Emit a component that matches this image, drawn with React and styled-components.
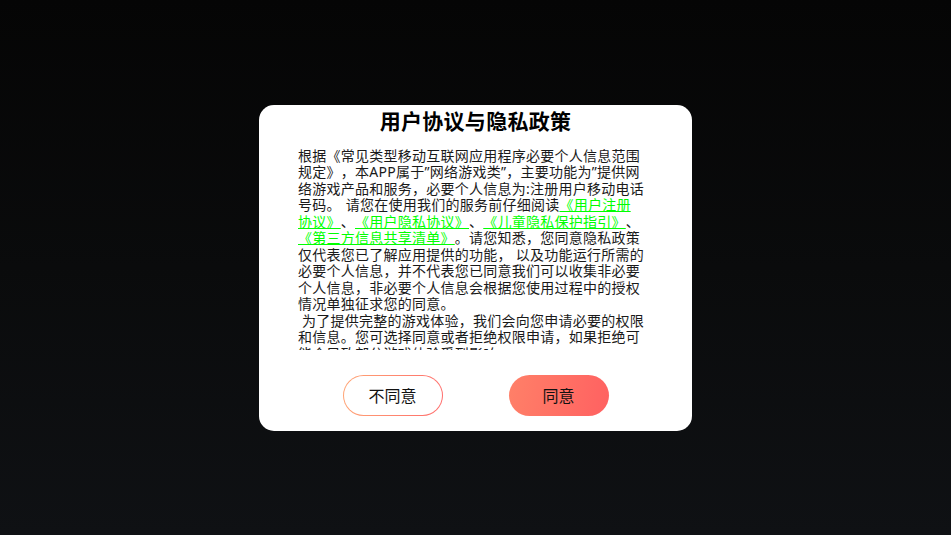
import React from "react";
import styled, { createGlobalStyle } from "styled-components";

const Global = createGlobalStyle`
  html, body { margin: 0; padding: 0; height: 100%; }
  body {
    background: linear-gradient(180deg, #050505 0%, #0a0b0c 50%, #0f1114 100%);
    font-family: "Noto Sans CJK SC", "Noto Sans", sans-serif;
  }
  #root { height: 100%; }
`;

const Screen = styled.div`
  width: 100vw;
  height: 100vh;
  display: flex;
  align-items: center;
  justify-content: center;
`;

const Card = styled.div`
  width: 433px;
  height: 326px;
  box-sizing: border-box;
  background: #ffffff;
  border-radius: 15px;
  display: flex;
  flex-direction: column;
  align-items: center;
  padding: 1px 0 0;
`;

const Title = styled.h1`
  margin: 0;
  font-size: 21px;
  line-height: 28px;
  font-weight: 700;
  color: #000;
  letter-spacing: 0.3px;
`;

const Scroll = styled.div`
  margin-top: 14px;
  align-self: flex-start;
  margin-left: 39px;
  width: 346.3px;
  height: 202px;
  overflow: hidden;
`;

const Body = styled.p`
  margin: 0;
  font-family: "Noto Sans", "Noto Sans CJK SC", sans-serif;
  font-size: 14px;
  letter-spacing: 0.25px;
  line-height: 16.5px;
  color: #1a1a1a;
  white-space: pre-wrap;
  word-break: break-all;
  text-spacing-trim: space-all;
`;

const Link = styled.a`
  color: #00ff00;
  text-decoration: underline;
  text-decoration-thickness: 1px;
  text-underline-offset: 1px;
`;

const Buttons = styled.div`
  margin-top: 25px;
  display: flex;
  gap: 66px;
`;

const Button = styled.button`
  width: 100px;
  height: 41px;
  border-radius: 21px;
  font-family: inherit;
  font-size: 16px;
  color: #111;
  cursor: pointer;
  box-sizing: border-box;
  padding: 0;
  border: ${(p) => (p.$primary ? "none" : "1.5px solid transparent")};
  background: ${(p) =>
    p.$primary
      ? "linear-gradient(100deg, #ff8068 0%, #ff6161 100%)"
      : "linear-gradient(#fff, #fff) padding-box, linear-gradient(100deg, #ffa675 0%, #ff6b6b 100%) border-box"};
`;

export default function App() {
  return (
    <>
      <Global />
      <Screen>
        <Card>
          <Title>用户协议与隐私政策</Title>
          <Scroll>
            <Body>
              {"根据《常见类型移动互联网应用程序必要个人信息范围规定》，本APP属于”网络游戏类”，主要功能为”提供网络游戏产品和服务，必要个人信息为:注册用户移动电话号码。\u2004请您在使用我们的服务前仔细阅读"}
              <Link>《用户注册协议》</Link>
              {"、"}
              <Link>《用户隐私协议》</Link>
              {"、"}
              <Link>《儿童隐私保护指引》</Link>
              {"、"}
              <Link>《第三方信息共享清单》</Link>
              {"。请您知悉，您同意隐私政策仅代表您已了解应用提供的功能， 以及功能运行所需的必要个人信息，并不代表您已同意我们可以收集非必要个人信息，非必要个人信息会根据您使用过程中的授权情况单独征求您的同意。\n 为了提供完整的游戏体验，我们会向您申请必要的权限和信息。您可选择同意或者拒绝权限申请，如果拒绝可能会导致部分游戏体验受到影响。"}
            </Body>
          </Scroll>
          <Buttons>
            <Button>不同意</Button>
            <Button $primary>同意</Button>
          </Buttons>
        </Card>
      </Screen>
    </>
  );
}
